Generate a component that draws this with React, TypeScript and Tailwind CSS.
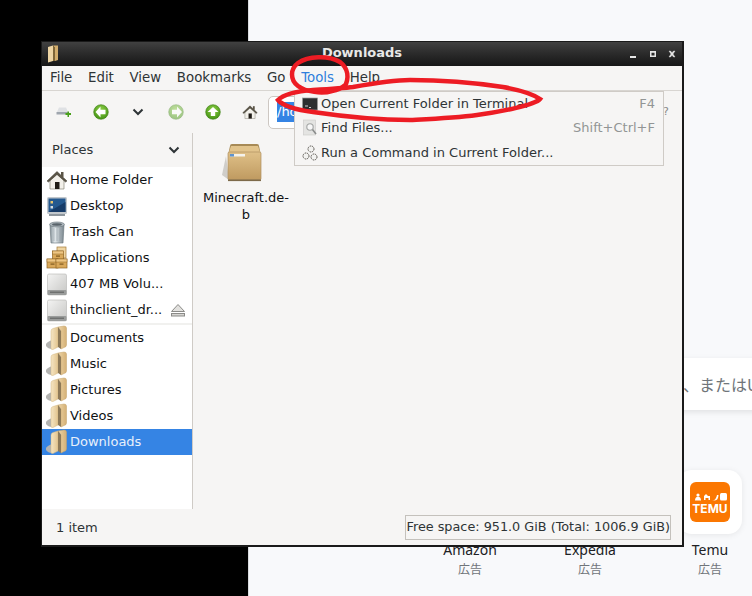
import React from "react";

const FONT = "font-['DejaVu_Sans',sans-serif]";

function FolderIcon() {
  return (
    <svg width="22" height="26" viewBox="0 0 22 26" className="shrink-0">
      <defs>
        <linearGradient id="fa" x1="0" x2="1" y1="0" y2="0">
          <stop offset="0" stopColor="#f6e6c4" />
          <stop offset="1" stopColor="#e2c48e" />
        </linearGradient>
        <linearGradient id="fb" x1="0" x2="1" y1="0" y2="0">
          <stop offset="0" stopColor="#eed5a6" />
          <stop offset="1" stopColor="#d4b076" />
        </linearGradient>
      </defs>
      <path d="M0 19 Q1 17 6 15 V24 Q2 24 0 21 Z" fill="#b4b4b2" />
      <path d="M5 6 Q5 4 7 3.5 L12 2 V22 L7 24.5 Q5 25 5 23 Z" fill="url(#fa)" stroke="#d3b680" strokeWidth=".5" />
      <path d="M12 2 L18 1 Q20.5 1 20.5 3 V20 Q20.5 22 18 22.5 L15 24 V6 Z" fill="url(#fb)" stroke="#c4a268" strokeWidth=".5" />
      <path d="M12 2 L15 6 V24 L12 22 Z" fill="#8e7a58" />
    </svg>
  );
}

function HomeIcon({ size = 22 }: { size?: number }) {
  return (
    <svg width={size} height={size} viewBox="0 0 22 22" className="shrink-0">
      <path d="M4 11 V20 H18 V11 L11 5 Z" fill="#f2f0ea" stroke="#8a8678" strokeWidth=".7" />
      <rect x="9" y="13" width="4.5" height="7" fill="#1f1b16" />
      <path d="M1 12 L11 2.5 L21 12 L19.5 13 L11 5.5 L2.5 13 Z" fill="#5b5547" stroke="#3b372d" strokeWidth=".5" />
      <rect x="15" y="3" width="2.5" height="5" fill="#5b5547" />
    </svg>
  );
}

function DesktopIcon() {
  return (
    <svg width="22" height="22" viewBox="0 0 22 22" className="shrink-0">
      <rect x="1" y="2" width="20" height="17" rx="1.5" fill="#c2c8cd" />
      <rect x="2.5" y="3.5" width="17" height="13.5" fill="#25598f" />
      <path d="M2.5 17 L19.5 7 V17 Z" fill="#173c69" />
      <rect x="4.5" y="6" width="2.5" height="2.5" fill="#e7c46e" />
      <rect x="4.5" y="11" width="2.5" height="2.5" fill="#d8dde2" />
      <rect x="3" y="19" width="16" height="2" fill="#8f979e" />
    </svg>
  );
}

function TrashIcon() {
  return (
    <svg width="22" height="24" viewBox="0 0 22 24" className="shrink-0">
      <defs>
        <linearGradient id="tr" x1="0" x2="1" y1="0" y2="0">
          <stop offset="0" stopColor="#7e8b93" />
          <stop offset=".35" stopColor="#e6ecef" />
          <stop offset="1" stopColor="#76838b" />
        </linearGradient>
      </defs>
      <path d="M4 5 H18 L17 23 H5 Z" fill="url(#tr)" stroke="#6a757c" strokeWidth=".6" />
      <ellipse cx="11" cy="4.5" rx="7.5" ry="2.5" fill="#aab4ba" stroke="#68737a" strokeWidth=".6" />
      <ellipse cx="11" cy="4.5" rx="5" ry="1.2" fill="#5a646b" />
      <path d="M8 8 V21 M11 8 V21 M14 8 V21" stroke="#8a969d" strokeWidth=".5" />
    </svg>
  );
}

function Box({ x, y }: { x: number; y: number }) {
  return (
    <g transform={`translate(${x} ${y})`}>
      <rect width="11" height="9" fill="#d9a85a" stroke="#8f6424" strokeWidth=".7" />
      <rect width="11" height="3" fill="#efc785" stroke="#8f6424" strokeWidth=".5" />
      <rect x="3.5" y="4.5" width="4" height="1.2" fill="#7f5a20" />
    </g>
  );
}
function AppsIcon() {
  return (
    <svg width="22" height="24" viewBox="0 0 22 24" className="shrink-0">
      <rect x="11" y="1" width="9" height="11" fill="#efd5a2" stroke="#a47a38" strokeWidth=".7" />
      <Box x={6.5} y={5} />
      <Box x={1} y={13} />
      <Box x={10} y={13} />
    </svg>
  );
}

function DriveIcon() {
  return (
    <svg width="22" height="24" viewBox="0 0 22 24" className="shrink-0">
      <defs>
        <linearGradient id="dr" x1="0" x2="1" y1="0" y2="1">
          <stop offset="0" stopColor="#f4f4f3" />
          <stop offset="1" stopColor="#c6c6c4" />
        </linearGradient>
      </defs>
      <rect x="1.5" y="2" width="19" height="21" rx="1.5" fill="url(#dr)" stroke="#b5b5b3" strokeWidth=".6" />
      <rect x="1.5" y="18" width="19" height="5" rx="1" fill="#9a9c9b" />
      <rect x="4" y="19.5" width="14" height="1.5" fill="#6f7170" />
    </svg>
  );
}

function BackIcon({ up = false, dim = false, flip = false }: { up?: boolean; dim?: boolean; flip?: boolean }) {
  const d = up ? "M7 0 L1.5 5 H4.8 V9 H9.2 V5 H12.5 Z" : "M0 7 L5 1.5 V4.8 H10 V9.2 H5 V12.5 Z";
  return (
    <svg width="16" height="16" viewBox="0 0 16 16" className={dim ? "opacity-50" : ""}>
      <defs>
        <radialGradient id="gb" cx=".5" cy=".35" r=".7">
          <stop offset="0" stopColor="#8fd048" />
          <stop offset="1" stopColor="#3f8f10" />
        </radialGradient>
      </defs>
      <circle cx="8" cy="8" r="7.3" fill="url(#gb)" stroke="#3a7d12" strokeWidth=".6" />
      <g transform={up ? "translate(1 3)" : flip ? "translate(14 1) scale(-1 1)" : "translate(2.5 1)"}>
        <path d={d} fill="#fff" />
      </g>
    </svg>
  );
}

function Chevron({ className = "" }: { className?: string }) {
  return (
    <svg width="12" height="8" viewBox="0 0 12 8" className={className}>
      <path d="M1.5 1.5 L6 6 L10.5 1.5" fill="none" stroke="#2e3436" strokeWidth="2" />
    </svg>
  );
}

function PackageIcon() {
  return (
    <svg width="42" height="42" viewBox="0 0 42 42">
      <defs>
        <linearGradient id="pk" x1="0" x2="0" y1="0" y2="1">
          <stop offset="0" stopColor="#dfc088" />
          <stop offset="1" stopColor="#bf9a60" />
        </linearGradient>
      </defs>
      <path d="M4 14 L0 33 L7 38 Z" fill="#cfcdc9" />
      <path d="M8 4 Q8 2 10 2 H35 Q37 2 37 4 L39 13 H6 Z" fill="#a78a56" />
      <path d="M9 4 H36 L38 10 H7 Z" fill="#e2c48c" />
      <rect x="6" y="10" width="33" height="28" rx="1.5" fill="url(#pk)" stroke="#b09060" strokeWidth=".7" />
      <rect x="8" y="12" width="15" height="2.5" fill="#f4f2ec" />
      <rect x="8" y="12" width="4" height="2.5" fill="#5f94cf" />
      <rect x="6" y="37.5" width="33" height="1.6" fill="#7d6a4a" />
    </svg>
  );
}

function TerminalIcon() {
  return (
    <svg width="16" height="14" viewBox="0 0 16 14">
      <rect x=".5" y="1" width="15" height="12" fill="#2c2f30" stroke="#9a9c9b" strokeWidth=".7" />
      <path d="M3 9 H6 M7 10.5 H9" stroke="#e4e4e4" strokeWidth=".9" />
    </svg>
  );
}
function FindIcon() {
  return (
    <svg width="16" height="18" viewBox="0 0 16 18">
      <rect x="1.5" y="1" width="12" height="15" fill="#e4e4e2" stroke="#c9c9c7" strokeWidth=".6" />
      <circle cx="8" cy="8" r="3.2" fill="#f7f7f7" stroke="#a3a5a4" strokeWidth="1.1" />
      <path d="M10.5 10.5 L14 15" stroke="#8a8c8b" strokeWidth="1.6" />
    </svg>
  );
}
function GearsIcon() {
  return (
    <svg width="18" height="18" viewBox="0 0 18 18">
      <g fill="#f2f2f0" stroke="#54504a" strokeWidth="1">
        <circle cx="10" cy="5" r="3" strokeDasharray="1.4 .7" />
        <circle cx="5" cy="12" r="3" strokeDasharray="1.4 .7" />
        <circle cx="13" cy="13" r="3" strokeDasharray="1.4 .7" />
      </g>
    </svg>
  );
}

function Eject() {
  return (
    <svg width="16" height="14" viewBox="0 0 16 14">
      <path d="M8 1.5 L14.5 8.5 H1.5 Z" fill="#e2e1de" stroke="#8b8b88" />
      <rect x="1.5" y="10.5" width="13" height="2.5" fill="#d6d5d2" stroke="#8b8b88" />
    </svg>
  );
}

function SideRow({ icon, label, selected = false, eject = false }: { icon: React.ReactNode; label: string; selected?: boolean; eject?: boolean }) {
  return (
    <div className={`flex h-[26px] items-center pl-[2px] ${selected ? "bg-[#3584e4] text-[#e8f0fb]" : "text-[#0f1214]"}`}>
      <span className="flex w-[25px] justify-center">{icon}</span>
      <span className="ml-px flex-1 whitespace-nowrap text-[13px]">{label}</span>
      {eject && <span className="mr-[6px]"><Eject /></span>}
    </div>
  );
}

function MenuItem({ icon, label, shortcut, heightClass }: { icon: React.ReactNode; label: string; shortcut?: string; heightClass: string }) {
  return (
    <div className={`flex items-center pl-[5px] pr-[8px] text-[13px] text-[#2e3436] ${heightClass}`}>
      <span className="flex w-[20px] justify-center">{icon}</span>
      <span className="ml-px flex-1">{label}</span>
      {shortcut && <span className="text-[#929595]">{shortcut}</span>}
    </div>
  );
}

function Tile({ name, logo }: { name: string; logo?: boolean }) {
  return (
    <div className="flex w-[120px] shrink-0 flex-col items-center">
      <div className="flex h-[64px] w-[64px] items-center justify-center rounded-[14px] bg-white shadow-[0_1px_6px_rgba(0,0,0,0.08)]">
        {logo && (
          <div className="flex h-[40px] w-[40px] flex-col items-center justify-center rounded-[6px] bg-[#fb7701] pt-[3px] text-white">
            <svg width="34" height="9" viewBox="0 0 34 9" className="mb-px">
              <g fill="#fff">
                <circle cx="5" cy="3" r="1.6" />
                <path d="M2 8.5 Q2 5 5 4.5 Q8 5 8 8.5 Z" />
                <path d="M11 8 V4 L13 2 L15 4 H17 V8 H15.5 V6 H12.5 V8 Z" />
                <path d="M19 8.5 Q23 8.5 24 3 H25.5 Q25.5 8.5 21 8.5 Z" />
                <rect x="27" y="1" width="7" height="7.5" rx="1.5" />
              </g>
            </svg>
            <span className="text-[12px] font-bold leading-[13px] font-['Inter',sans-serif]">TEMU</span>
          </div>
        )}
      </div>
      <div className="mt-[7px] text-[14px] leading-[18px] text-[#202124]">{name}</div>
      <div className="mt-[2px] text-[12px] leading-[16px] text-[#70757a] font-['Noto_Sans_CJK_JP',sans-serif]">広告</div>
    </div>
  );
}

export default function App() {
  return (
    <div className={`relative flex h-[596px] w-[752px] overflow-hidden bg-black ${FONT}`}>
      <div className="w-[248px] shrink-0 bg-black" />
      <div className="flex min-w-0 flex-1 flex-col overflow-hidden border-l border-[#dadce0] bg-[#f8f9fb] pt-[358px] font-['Noto_Sans',sans-serif]">
        <div className="ml-[300px] flex h-[52px] w-[300px] shrink-0 items-center bg-white pl-[134px] text-[16px] text-[#70757a] shadow-[0_2px_6px_rgba(0,0,0,0.1)] font-['Noto_Sans_CJK_JP',sans-serif] whitespace-nowrap">
          、またはU
        </div>
        <div className="ml-[161px] mt-[60px] flex">
          <Tile name="Amazon" />
          <Tile name="Expedia" />
          <Tile name="Temu" logo />
        </div>
      </div>

      {/* application window floating over the page */}
      <div className="absolute left-[41px] top-[41px] flex h-[506px] w-[643px] flex-col border-b-2 border-l border-r-2 border-t border-[#1a1a1a] bg-[#f6f5f4]">
        <div className="grid h-[24px] shrink-0 grid-cols-[1fr_auto_1fr] items-center bg-gradient-to-b from-[#414141] via-[#2a2a2a] to-[#171717] px-[3px]">
          <svg width="16" height="18" viewBox="0 0 16 18">
            <path d="M3 2 L8 0.5 V16 L3 17.5 Z" fill="#eed5a4" />
            <path d="M8 .5 H13 V15 L10 16 V3 Z" fill="#d3ad6c" />
            <path d="M8 .5 L10 3 V16 L8 16 Z" fill="#7f6638" />
          </svg>
          <div className="-mt-[2px] text-center text-[13px] font-bold text-[#e8e8e8]">Downloads</div>
          <svg width="46" height="10" viewBox="0 0 46 10" fill="#e6e6e6" className="ml-auto mr-[3px]">
            <rect x="0" y="7" width="6" height="2" />
            <path d="M20 2 H26 V8 H20 Z M21.5 3.8 V6.5 H24.5 V3.8 Z" fillRule="evenodd" />
            <path d="M39 2 L40.5 2 L42 3.8 L43.5 2 H45 L43 5 L45 8 H43.5 L42 6.2 L40.5 8 H39 L41 5 Z" stroke="#e6e6e6" strokeWidth=".4" />
          </svg>
        </div>

        <div className="flex h-[25px] shrink-0 items-center gap-[15.7px] border-b border-[#d8d5d1] pl-[8px] text-[13.33px] text-[#2e3436]">
          <span>File</span>
          <span>Edit</span>
          <span>View</span>
          <span>Bookmarks</span>
          <span>Go</span>
          <span className="relative text-[#2f7fdc]">
            Tools
            <span className="absolute -bottom-[4px] left-0 h-[3px] w-full bg-[#3584e4]" />
          </span>
          <span>Help</span>
        </div>

        <div className="flex h-[42px] shrink-0 items-center">
          <div className="flex w-[226px] items-center">
            <span className="ml-[14px] flex w-[16px] justify-center">
              <svg width="16" height="11" viewBox="0 0 16 11">
                <path d="M3 0.5 H10 L12 5 H1 Z" fill="#dfe1e4" />
                <rect x="0.5" y="5" width="12" height="2.5" fill="#9fa6ae" />
                <path d="M9.5 6 H11.5 V4.5 H13 V6 H15 V8 H13 V10 H11.5 V8 H9.5 Z" fill="#48a01a" />
              </svg>
            </span>
            <span className="ml-[21px]"><BackIcon /></span>
            <Chevron className="ml-[23px]" />
            <span className="ml-[24px]"><BackIcon dim flip /></span>
            <span className="ml-[21px]"><BackIcon up /></span>
            <span className="ml-[21px]"><HomeIcon size={16} /></span>
          </div>
          <div className="flex h-[33px] w-[390px] items-center rounded-l-[5px] border border-[#cdc7c2] bg-white pl-[8px] text-[13px]">
            <span className="bg-[#3584e4] text-white">/home</span>
          </div>
          <span className="ml-[5px] text-[11px] text-[#8a8a8a]">?</span>
        </div>

        <div className="flex min-h-0 flex-1">
          <div className="flex w-[151px] shrink-0 flex-col border-r border-[#cfcbc6]">
            <div className="flex h-[34px] shrink-0 items-center justify-between pb-px pl-[10px] pr-[12px] text-[13px] text-[#2e3436]">
              <span>Places</span>
              <Chevron />
            </div>
            <div className="flex-1 bg-white">
              <SideRow icon={<HomeIcon />} label="Home Folder" />
              <SideRow icon={<DesktopIcon />} label="Desktop" />
              <SideRow icon={<TrashIcon />} label="Trash Can" />
              <SideRow icon={<AppsIcon />} label="Applications" />
              <SideRow icon={<DriveIcon />} label="407 MB Volu..." />
              <SideRow icon={<DriveIcon />} label="thinclient_dr..." eject />
              <div className="h-[2px] bg-[#f1f1ef]" />
              <SideRow icon={<FolderIcon />} label="Documents" />
              <SideRow icon={<FolderIcon />} label="Music" />
              <SideRow icon={<FolderIcon />} label="Pictures" />
              <SideRow icon={<FolderIcon />} label="Videos" />
              <SideRow icon={<FolderIcon />} label="Downloads" selected />
            </div>
          </div>
          <div className="flex-1 pl-[8px] pt-[9px]">
            <div className="flex w-[90px] flex-col items-center">
              <span className="-ml-[7px]"><PackageIcon /></span>
              <div className="mt-[5px] w-[90px] whitespace-nowrap text-center text-[13px] leading-[17px] text-[#0f1214]">
                Minecraft.de-
                <br />b
              </div>
            </div>
          </div>
        </div>

        <div className="flex h-[36px] shrink-0 items-center justify-between pl-[14px] pr-[11px] text-[13px] text-[#2e3436]">
          <span className="pt-px">1 item</span>
          <span className="flex h-[25px] items-center whitespace-nowrap border border-[#c4c1bc] text-[12.8px]">Free space: 951.0 GiB (Total: 1006.9 GiB)</span>
        </div>
      </div>

      {/* open Tools menu */}
      <div className="absolute left-[294px] top-[91px] w-[370px] border border-[#cfcbc6] bg-[#f6f5f4]">
        <MenuItem heightClass="h-[23px]" icon={<TerminalIcon />} label="Open Current Folder in Terminal" shortcut="F4" />
        <MenuItem heightClass="h-[26px]" icon={<FindIcon />} label="Find Files..." shortcut="Shift+Ctrl+F" />
        <MenuItem heightClass="h-[24px]" icon={<GearsIcon />} label="Run a Command in Current Folder..." />
      </div>

      {/* hand-drawn red annotations */}
      <svg width="752" height="596" viewBox="0 0 752 596" className="pointer-events-none absolute left-0 top-0" fill="none" stroke="#ed1c24" strokeWidth="4.5">
        <path d="M344 88 C 350 78 348 68 340 62 C 328 55 308 56 298 63 C 290 69 290 80 298 86 C 306 92 322 94 332 91 C 338 90 342 88 345 85" />
        <path d="M278 100 C 285 93 300 91 313 90 C 330 89 345 88 353 87 C 375 83 395 80 410 80 C 440 80 470 82 503 87 C 520 90 533 94 540 99 C 535 105 500 112 477 115 C 455 118 430 119 410 120 C 380 120 340 116 313 112 C 295 110 282 105 278 100 Z" />
      </svg>
    </div>
  );
}
